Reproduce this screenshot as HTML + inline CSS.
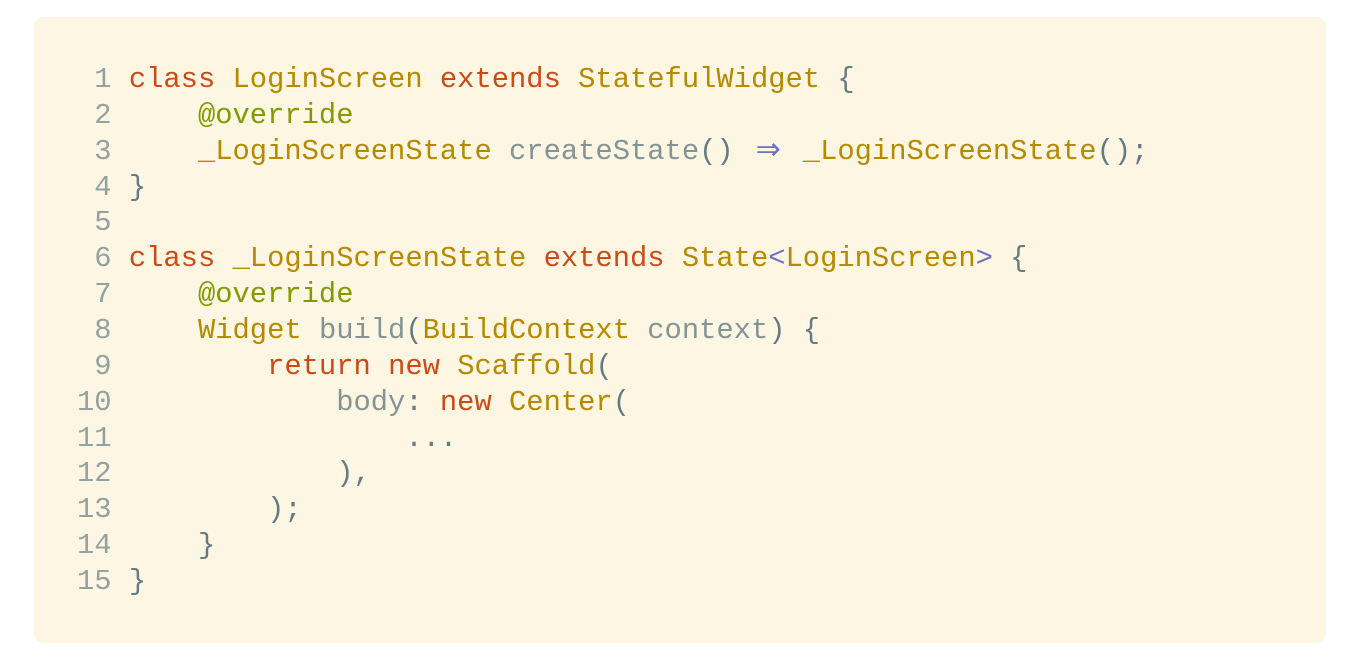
<!DOCTYPE html>
<html><head><meta charset="utf-8"><style>
html,body{margin:0;padding:0;background:#fff;width:1360px;height:662px;overflow:hidden}
.box{position:absolute;left:34px;top:17px;width:1292px;height:626px;background:#fdf6e3;border-radius:10px}
pre{position:absolute;left:77px;top:62px;margin:0;font-family:"Liberation Mono","DejaVu Sans Mono",monospace;font-size:28.8px;line-height:35.86px;color:#657b83;white-space:pre}
.n{color:#93a1a1}.k{color:#cb4b16}.c{color:#b58900}.a{color:#859900}.i{color:#839496}.v{color:#6c71c4}
.ar{display:inline-block;width:34.56px;text-align:center;color:#6c71c4;font-family:"DejaVu Sans",sans-serif;font-size:30px;line-height:20px;overflow:visible}
</style></head><body><div class="box"></div><pre><span class="n"> 1</span> <span class="k">class</span> <span class="c">LoginScreen</span> <span class="k">extends</span> <span class="c">StatefulWidget</span> {
<span class="n"> 2</span>     <span class="a">@override</span>
<span class="n"> 3</span>     <span class="c">_LoginScreenState</span> <span class="i">createState</span>() <span class="ar">⇒</span> <span class="c">_LoginScreenState</span>();
<span class="n"> 4</span> }
<span class="n"> 5</span>
<span class="n"> 6</span> <span class="k">class</span> <span class="c">_LoginScreenState</span> <span class="k">extends</span> <span class="c">State</span><span class="v">&lt;</span><span class="c">LoginScreen</span><span class="v">&gt;</span> {
<span class="n"> 7</span>     <span class="a">@override</span>
<span class="n"> 8</span>     <span class="c">Widget</span> <span class="i">build</span>(<span class="c">BuildContext</span> <span class="i">context</span>) {
<span class="n"> 9</span>         <span class="k">return</span> <span class="k">new</span> <span class="c">Scaffold</span>(
<span class="n">10</span>             <span class="i">body</span>: <span class="k">new</span> <span class="c">Center</span>(
<span class="n">11</span>                 ...
<span class="n">12</span>             ),
<span class="n">13</span>         );
<span class="n">14</span>     }
<span class="n">15</span> }</pre></body></html>
